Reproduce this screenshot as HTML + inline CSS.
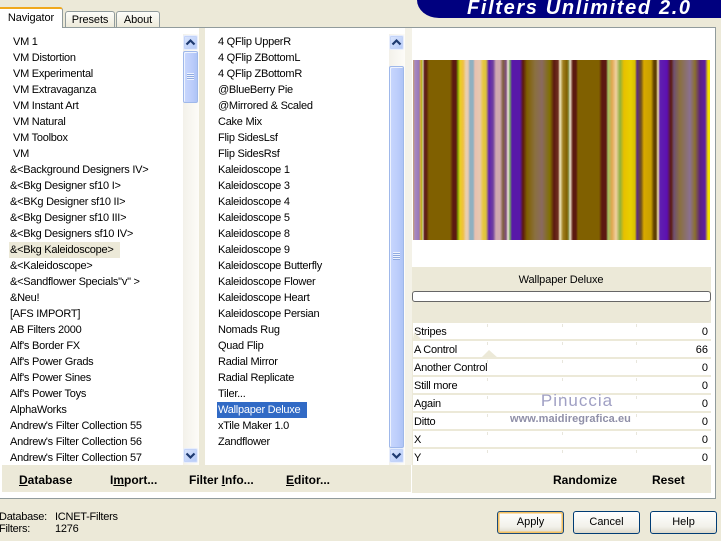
<!DOCTYPE html>
<html><head><meta charset="utf-8"><style>
html,body{margin:0;padding:0}
body{width:721px;height:541px;overflow:hidden;position:relative;background:#ece9d8;font-family:"Liberation Sans",sans-serif;font-size:11px;letter-spacing:-.25px;color:#000}
.a{position:absolute}
.list div{height:16px;line-height:16px;white-space:pre;padding-left:10px}
.list div.v{padding-left:13px}
.sb{background:linear-gradient(90deg,#f3f1ea,#fdfcf8)}
.btn{background:linear-gradient(135deg,#dbe6fd,#b4c9f8);border:1px solid #e8eefc;box-sizing:border-box;border-radius:2px;box-shadow:inset 0 0 0 1px #c3d3f8}
.thumb{background:linear-gradient(90deg,#c8d7fc,#bccdfb 60%,#aec4f6);border:1px solid #9fb8ea;box-shadow:inset 1px 1px 0 #eef3fe;box-sizing:border-box;border-radius:2px}
.row{position:absolute;left:413px;width:298px;height:16px;background:#fff;line-height:18px;padding:0}
.row b{font-weight:normal;position:absolute;left:1px;top:0;font-size:11px}
.row i{font-style:normal;position:absolute;right:3px;top:0;font-size:11px;letter-spacing:0}
.t{position:absolute;top:1px;width:1px;height:3px;background:#e8e6dc}
.bb{position:absolute;font-weight:bold;font-size:12px;letter-spacing:0;line-height:14px;top:473px;white-space:pre}
.pb{position:absolute;top:511px;height:23px;width:67px;box-sizing:border-box;border:1px solid #003c74;border-radius:3px;background:linear-gradient(#fff,#f2f1ea 70%,#dcd8ca);text-align:center;line-height:21px;font-size:11px;letter-spacing:0}
.st{position:absolute;line-height:14px;white-space:pre;font-size:11px;letter-spacing:-.25px}
</style></head><body>
<!-- tabs -->
<div class="a" style="left:65px;top:11px;width:48px;height:16px;background:linear-gradient(#fdfdf9,#ece9d8);border:1px solid #919b9c;border-bottom:0;border-radius:3px 3px 0 0;text-align:center;line-height:17px;font-size:11px;letter-spacing:-.1px">Presets</div>
<div class="a" style="left:116px;top:11px;width:42px;height:16px;background:linear-gradient(#fdfdf9,#ece9d8);border:1px solid #919b9c;border-bottom:0;border-radius:3px 3px 0 0;text-align:center;line-height:17px;font-size:11px;letter-spacing:-.1px">About</div>
<!-- panel -->
<div class="a" style="left:0;top:27px;width:715px;height:470px;background:#fff;border:1px solid #919b9c;border-left:0;box-sizing:content-box"></div>
<div class="a" style="left:0;top:7px;width:63px;height:21px;background:#fff;border-right:1px solid #919b9c;border-radius:0 3px 0 0;box-sizing:border-box;border-top:2px solid #f0a81c;text-align:center;line-height:19px;font-size:11px;letter-spacing:-.1px">Navigator</div>
<!-- header -->
<div class="a" style="left:417px;top:0;width:304px;height:18px;background:#00007f;border-radius:0 0 0 22px/0 0 0 18px"></div>
<div class="a" style="left:467px;top:-3px;width:240px;height:20px;color:#fff;font-weight:bold;font-style:italic;font-size:20px;line-height:22px;letter-spacing:1.65px;white-space:pre">Filters Unlimited 2.0</div>
<!-- list 1 -->
<div class="a list" style="left:0;top:34px;width:183px;height:431px;overflow:hidden">
<div class="v">VM 1</div><div class="v">VM Distortion</div><div class="v">VM Experimental</div><div class="v">VM Extravaganza</div><div class="v">VM Instant Art</div><div class="v">VM Natural</div><div class="v">VM Toolbox</div><div class="v">VM</div>
<div>&amp;&lt;Background Designers IV&gt;</div><div>&amp;&lt;Bkg Designer sf10 I&gt;</div><div>&amp;&lt;BKg Designer sf10 II&gt;</div><div>&amp;&lt;Bkg Designer sf10 III&gt;</div><div>&amp;&lt;Bkg Designers sf10 IV&gt;</div>
<div style="position:relative"><span class="a" style="left:9px;top:0;width:111px;height:16px;background:#ece9d8"></span><span style="position:relative">&amp;&lt;Bkg Kaleidoscope&gt;</span></div>
<div>&amp;&lt;Kaleidoscope&gt;</div><div>&amp;&lt;Sandflower Specials"v" &gt;</div><div>&amp;Neu!</div><div>[AFS IMPORT]</div><div>AB Filters 2000</div><div>Alf's Border FX</div><div>Alf's Power Grads</div><div>Alf's Power Sines</div><div>Alf's Power Toys</div><div>AlphaWorks</div><div>Andrew's Filter Collection 55</div><div>Andrew's Filter Collection 56</div><div>Andrew's Filter Collection 57</div>
</div>
<!-- sb 1 -->
<div class="a sb" style="left:183px;top:34px;width:16px;height:431px"></div>
<div class="a" style="left:199px;top:28px;width:6px;height:437px;background:#ece9d8"></div>
<div class="a btn" style="left:183px;top:35px;width:15px;height:15px"></div>
<svg class="a" style="left:183px;top:35px" width="15" height="15"><path d="M3.5 9.5 L7.5 5.5 L11.5 9.5" fill="none" stroke="#1e3a70" stroke-width="2.2"/></svg>
<div class="a thumb" style="left:183px;top:51px;width:15px;height:52px"></div>
<div class="a" style="left:187px;top:73px;width:7px;height:7px;background:repeating-linear-gradient(#eef3fe 0 1px,#8faae0 1px 2px)"></div>
<div class="a btn" style="left:183px;top:448px;width:15px;height:15px"></div>
<svg class="a" style="left:183px;top:448px" width="15" height="15"><path d="M3.5 5.5 L7.5 9.5 L11.5 5.5" fill="none" stroke="#1e3a70" stroke-width="2.2"/></svg>
<!-- list 2 -->
<div class="a list" style="left:208px;top:34px;width:181px;height:431px;overflow:hidden">
<div>4 QFlip UpperR</div><div>4 QFlip ZBottomL</div><div>4 QFlip ZBottomR</div><div>@BlueBerry Pie</div><div>@Mirrored &amp; Scaled</div><div>Cake Mix</div><div>Flip SidesLsf</div><div>Flip SidesRsf</div><div>Kaleidoscope 1</div><div>Kaleidoscope 3</div><div>Kaleidoscope 4</div><div>Kaleidoscope 5</div><div>Kaleidoscope 8</div><div>Kaleidoscope 9</div><div>Kaleidoscope Butterfly</div><div>Kaleidoscope Flower</div><div>Kaleidoscope Heart</div><div>Kaleidoscope Persian</div><div>Nomads Rug</div><div>Quad Flip</div><div>Radial Mirror</div><div>Radial Replicate</div><div>Tiler...</div>
<div style="position:relative;color:#fff"><span class="a" style="left:9px;top:0;width:90px;height:16px;background:#316ac5"></span><span style="position:relative">Wallpaper Deluxe</span></div>
<div>xTile Maker 1.0</div><div>Zandflower</div>
</div>
<!-- sb 2 -->
<div class="a sb" style="left:389px;top:34px;width:16px;height:431px"></div>
<div class="a" style="left:405px;top:28px;width:7px;height:437px;background:#f4f2e8"></div>
<div class="a btn" style="left:389px;top:35px;width:15px;height:15px"></div>
<svg class="a" style="left:389px;top:35px" width="15" height="15"><path d="M3.5 9.5 L7.5 5.5 L11.5 9.5" fill="none" stroke="#1e3a70" stroke-width="2.2"/></svg>
<div class="a thumb" style="left:389px;top:66px;width:15px;height:382px"></div>
<div class="a" style="left:393px;top:252px;width:7px;height:8px;background:repeating-linear-gradient(#eef3fe 0 1px,#8faae0 1px 2px)"></div>
<div class="a btn" style="left:389px;top:448px;width:15px;height:15px"></div>
<svg class="a" style="left:389px;top:448px" width="15" height="15"><path d="M3.5 5.5 L7.5 9.5 L11.5 5.5" fill="none" stroke="#1e3a70" stroke-width="2.2"/></svg>
<!-- preview -->
<div class="a" style="left:413px;top:60px;width:297px;height:180px;background:linear-gradient(90deg,#c8a070 0,#a888c0 2px,#9878b8 6px,#c09060 7px,#e8c030 8px,#90a020 9px,#f0e8c0 10px,#6a3030 11px,#5c1a10 13px,#806000 16px,#806000 37px,#5c1a10 40px,#5c1a10 43px,#80a000 45px,#e8d020 47px,#f0c040 50px,#e8d0b0 53px,#e8c8b0 55px,#90b0c0 57px,#90b0c0 60px,#e8c0b0 62px,#e8c8b0 67px,#e8c840 70px,#d8c040 73px,#6020b0 76px,#7040a0 80px,#d0a8b0 83px,#d0a8b0 87px,#806040 90px,#805080 93px,#f0e8d8 95px,#70a060 97px,#5818a8 99px,#5818a8 107px,#5c1a10 110px,#806000 114px,#8a7040 122px,#8a6a60 129px,#807000 137px,#5c1a10 141px,#703020 145px,#f0e8c0 147px,#a08020 150px,#806000 154px,#90a060 156px,#f0e8d0 157px,#5c1a10 160px,#5c1a10 163px,#806000 165px,#806000 186px,#5c1a10 189px,#5c1a10 193px,#a0c060 195px,#e0a850 199px,#f0d0a0 203px,#90b040 207px,#e8c000 211px,#e8d000 218px,#d8c000 222px,#5c3080 224px,#705020 228px,#d8a800 231px,#c8a000 238px,#604000 241px,#604000 243px,#f0e0b0 245px,#6020b0 247px,#5c10b0 254px,#5c1a10 258px,#705070 261px,#8a7040 267px,#8a7090 277px,#8a7030 282px,#5c2080 287px,#5c20a0 292px,#f0e000 295px,#f0e000 297px)"></div>
<!-- band -->
<div class="a" style="left:412px;top:267px;width:299px;height:56px;background:#ece9d8"></div>
<div class="a" style="left:412px;top:273px;width:298px;text-align:center;line-height:14px;font-size:11px;letter-spacing:-.1px">Wallpaper Deluxe</div>
<div class="a" style="left:412px;top:291px;width:299px;height:11px;background:#fff;border:1px solid #666;border-radius:3px;box-sizing:border-box"></div>
<div class="a" style="left:412px;top:323px;width:299px;height:170px;background:#ece9d8"></div>
<!-- rows -->
<div class="row" style="top:323px"><b>Stripes</b><i>0</i><span class="t" style="left:74px"></span><span class="t" style="left:149px"></span><span class="t" style="left:223px"></span></div>
<div class="row" style="top:341px"><b>A Control</b><i>66</i><span class="t" style="left:74px"></span><span class="t" style="left:149px"></span><span class="t" style="left:223px"></span></div>
<div class="row" style="top:359px"><b>Another Control</b><i>0</i><span class="t" style="left:74px"></span><span class="t" style="left:149px"></span><span class="t" style="left:223px"></span></div>
<div class="row" style="top:377px"><b>Still more</b><i>0</i><span class="t" style="left:74px"></span><span class="t" style="left:149px"></span><span class="t" style="left:223px"></span></div>
<div class="row" style="top:395px"><b>Again</b><i>0</i><span class="t" style="left:74px"></span><span class="t" style="left:149px"></span><span class="t" style="left:223px"></span></div>
<div class="row" style="top:413px"><b>Ditto</b><i>0</i><span class="t" style="left:74px"></span><span class="t" style="left:149px"></span><span class="t" style="left:223px"></span></div>
<div class="row" style="top:431px"><b>X</b><i>0</i><span class="t" style="left:74px"></span><span class="t" style="left:149px"></span><span class="t" style="left:223px"></span></div>
<div class="row" style="top:449px"><b>Y</b><i>0</i><span class="t" style="left:74px"></span><span class="t" style="left:149px"></span><span class="t" style="left:223px"></span></div>
<svg class="a" style="left:413px;top:323px" width="298" height="40"><path d="M68 35 L76 27 L85 35 Z" fill="#ece9d8"/><path d="M0 16 L1 9 L8 16 Z" fill="#ece9d8"/></svg>
<!-- watermark -->
<div class="a" style="left:502px;top:390px;width:150px;text-align:center;color:#a0a0c4;font-size:17px;line-height:22px;letter-spacing:1px;white-space:pre">Pinuccia</div>
<div class="a" style="left:500px;top:412px;width:141px;text-align:center;color:#8f8fa8;font-size:11px;line-height:14px;letter-spacing:.07px;font-weight:bold;white-space:pre">www.maidiregrafica.eu</div>
<!-- bottom bar -->
<div class="a" style="left:2px;top:465px;width:409px;height:27px;background:#ece9d8"></div>
<div class="bb" style="left:19px"><u>D</u>atabase</div>
<div class="bb" style="left:110px">I<u>m</u>port...</div>
<div class="bb" style="left:189px">Filter <u>I</u>nfo...</div>
<div class="bb" style="left:286px"><u>E</u>ditor...</div>
<div class="bb" style="left:553px">Randomize</div>
<div class="bb" style="left:652px">Reset</div>
<!-- status -->
<div class="st" style="left:-1px;top:510px">Database:</div>
<div class="st" style="left:55px;top:510px">ICNET-Filters</div>
<div class="st" style="left:-1px;top:522px">Filters:</div>
<div class="st" style="left:55px;top:522px">1276</div>
<!-- buttons -->
<div class="pb" style="left:497px;border-color:#1a4a78;box-shadow:inset 0 0 0 1.5px #f4c060">Apply</div>
<div class="pb" style="left:573px">Cancel</div>
<div class="pb" style="left:650px">Help</div>
</body></html>
